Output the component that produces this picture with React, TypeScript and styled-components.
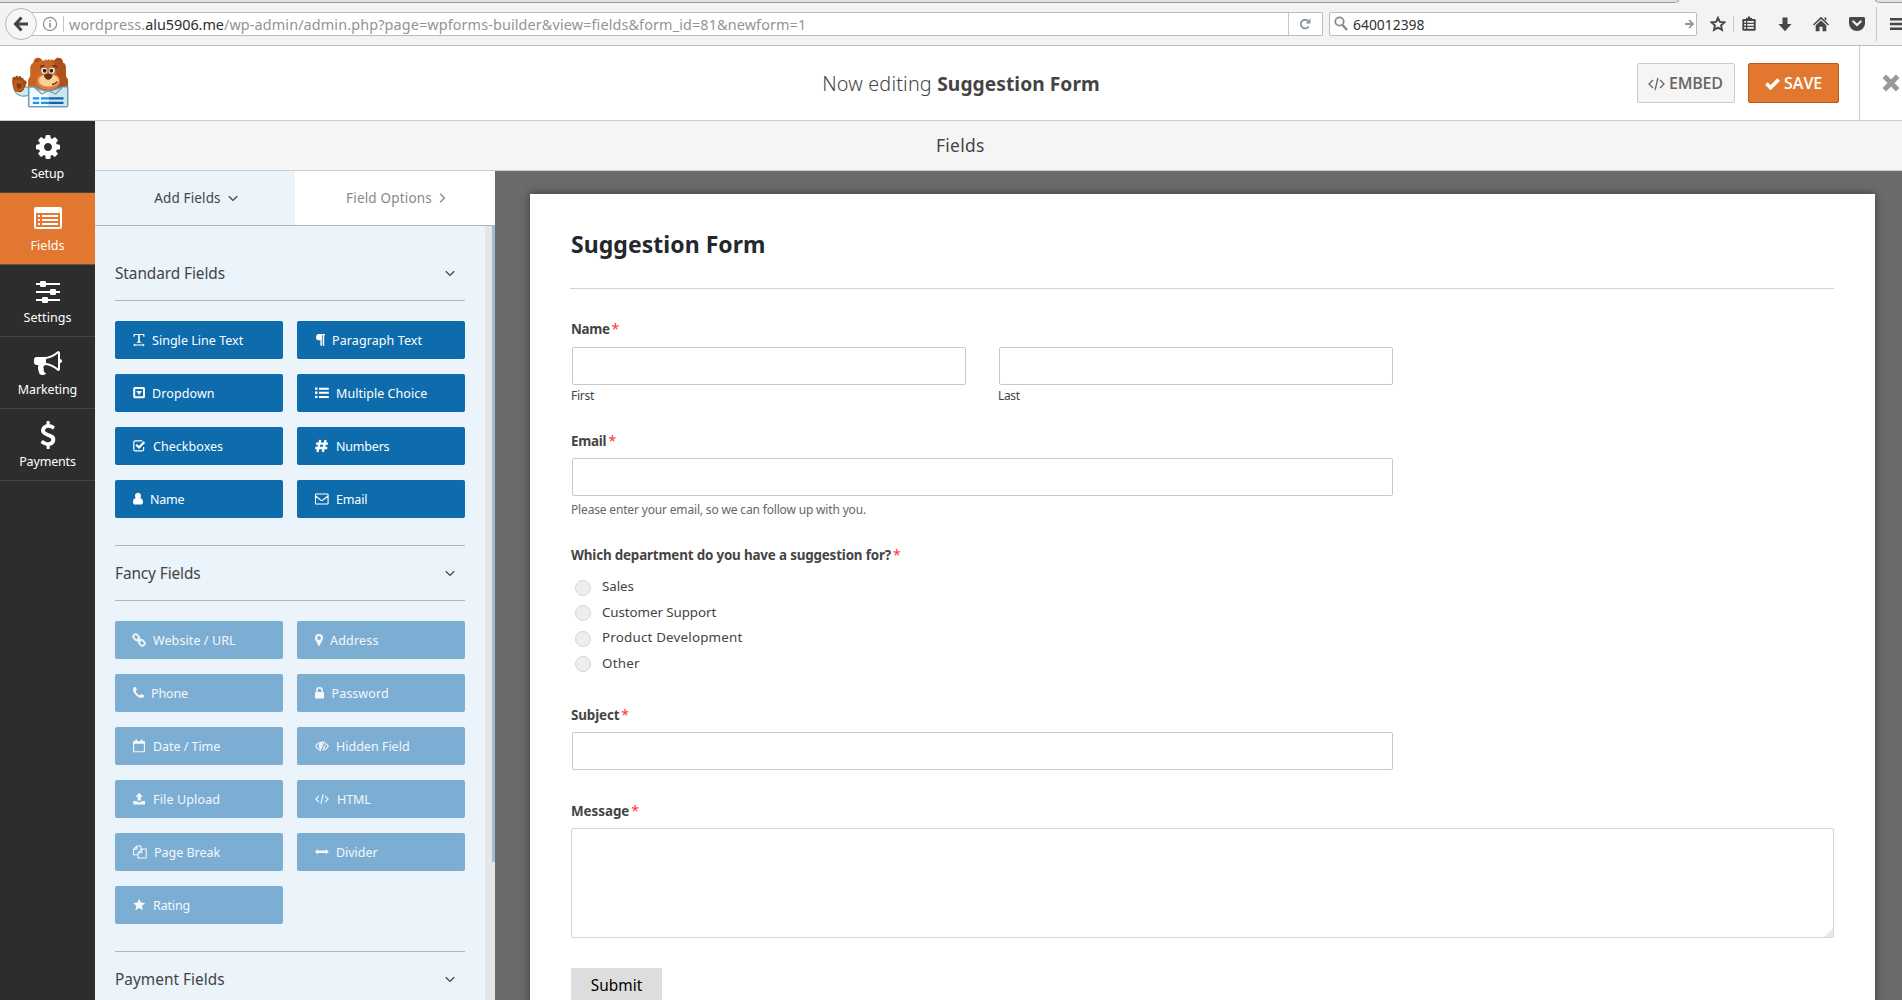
import React from 'react';
import styled, { createGlobalStyle, css } from 'styled-components';

const GlobalStyle = createGlobalStyle`
  *, *::before, *::after { box-sizing: border-box; }
  html, body { margin: 0; padding: 0; }
  body {
    overflow: hidden;
    background: #fff;
    color: #444;
    font-family: "Noto Sans", "Open Sans", sans-serif;
  }
  svg { display: block; flex: none; }
`;

const Window = styled.div`
  width: 1902px;
  height: 1000px;
  overflow: hidden;
  display: flex;
  flex-direction: column;
`;

const Text = styled.span<{ $ls?: number }>`
  letter-spacing: ${(p) => p.$ls ?? 0}px;
  white-space: pre;
`;

/* ---------- browser chrome ---------- */

const TabStrip = styled.div`
  display: flex;
  justify-content: space-between;
  height: 3px;
  flex: none;
  background: #f3f3f3;
`;

const TabEdge = styled.div<{ $width: number; $side: 'left' | 'right' }>`
  width: ${(p) => p.$width}px;
  height: 3px;
  background: #e1e1e1;
  border-bottom: 1px solid #979797;
  ${(p) =>
    p.$side === 'left'
      ? css`border-right: 1px solid #979797; border-bottom-right-radius: 6px 3px;`
      : css`border-left: 1px solid #979797; border-bottom-left-radius: 6px 3px;`}
`;

const BrowserBar = styled.div`
  display: flex;
  align-items: center;
  height: 43px;
  flex: none;
  padding-left: 5px;
  background: #f3f3f3;
  border-bottom: 1px solid #bfbfbf;
`;

const BackButton = styled.div`
  display: flex;
  align-items: center;
  justify-content: center;
  width: 32px;
  height: 32px;
  flex: none;
  z-index: 1;
  border: 1px solid #b9b9b9;
  border-radius: 50%;
  background: #f6f6f6;
`;

const UrlField = styled.div`
  display: flex;
  align-items: center;
  width: 1292px;
  height: 24px;
  flex: none;
  margin-left: -6px;
  padding-left: 11px;
  background: #fff;
  border: 1px solid #bdbdbd;
  border-left: 0;
  border-radius: 0 2px 2px 0;
  color: #949494;
  font-size: 14.4px;
  line-height: 22px;

  strong { color: #2e2e2e; font-weight: 400; }
`;

const FieldRule = styled.i<{ $left: number; $right: number; $height?: number }>`
  width: 1px;
  height: ${(p) => p.$height ?? 16}px;
  flex: none;
  margin: 0 ${(p) => p.$right}px 0 ${(p) => p.$left}px;
  background: #c6c6c6;
`;

const UrlText = styled.div`
  flex: 1;
  padding-top: 1px;
`;

const SearchField = styled.div`
  display: flex;
  align-items: center;
  width: 368px;
  height: 24px;
  flex: none;
  margin: 0 13px 0 6px;
  padding: 0 2px 0 4px;
  background: #fff;
  border: 1px solid #bdbdbd;
  border-radius: 2px;
  color: #333;
  font-size: 13.9px;
  line-height: 22px;
`;

const SearchText = styled.div`
  flex: 1;
  margin-left: 5px;
  padding-top: 1px;
`;

const BarIcons = styled.div`
  display: flex;
  align-items: center;
  color: #474747;
`;

/* ---------- builder header ---------- */

const Header = styled.header`
  display: flex;
  align-items: center;
  width: 1922px;
  height: 75px;
  flex: none;
  background: #fff;
  border-bottom: 1px solid #ccc;
`;

const HeaderSide = styled.div<{ $end?: boolean }>`
  display: flex;
  flex: 1 0 0;
  align-items: center;
  height: 100%;
  justify-content: ${(p) => (p.$end ? 'flex-end' : 'flex-start')};
`;

const Logo = styled.div`
  margin-left: 10px;
`;

const HeaderTitle = styled.h1`
  margin: 0;
  padding-top: 2px;
  font-size: 19.8px;
  font-weight: 300;
  line-height: 28px;
  white-space: pre;

  strong { font-weight: 700; font-size: 19.2px; }
`;

const HeaderButton = styled.button<{ $primary?: boolean; $width: number }>`
  display: flex;
  align-items: center;
  width: ${(p) => p.$width}px;
  height: 40px;
  margin: 0 0 0 13px;
  padding: 0 0 1px ${(p) => (p.$primary ? 16 : 10)}px;
  gap: 4px;
  border: 1px solid ${(p) => (p.$primary ? '#b85a1b' : '#ccc')};
  border-radius: 2px;
  background: ${(p) => (p.$primary ? '#e27730' : '#f5f5f5')};
  color: ${(p) => (p.$primary ? '#fff' : '#666')};
  font: 600 16px/20px "Open Sans", "Noto Sans", sans-serif;

  svg { position: relative; top: 1px; }
`;

const CloseCell = styled.div`
  display: flex;
  align-items: center;
  justify-content: center;
  width: 63px;
  height: 100%;
  margin-left: 20px;
  border-left: 1px solid #ccc;
  color: #999;
`;

/* ---------- body ---------- */

const Body = styled.div`
  display: flex;
  flex: 1;
  min-height: 0;
`;

const Rail = styled.nav`
  width: 95px;
  flex: none;
  background: #2d2d2d;
`;

const RailItem = styled.div<{ $active?: boolean }>`
  display: flex;
  flex-direction: column;
  align-items: center;
  height: 72px;
  padding-top: 11px;
  border-bottom: 1px solid ${(p) => (p.$active ? '#5f5751' : '#444')};
  background: ${(p) => (p.$active ? '#e27730' : '#2d2d2d')};
  color: #fff;
  font-size: 12.5px;
  line-height: 18px;
`;

const RailIcon = styled.div<{ $drop?: number }>`
  display: flex;
  align-items: flex-start;
  justify-content: center;
  height: 33px;
  width: 32px;
  padding-top: ${(p) => p.$drop ?? 1}px;
`;

const Main = styled.main`
  flex: 1;
  min-width: 0;
  display: flex;
  flex-direction: column;
`;

const SectionBar = styled.div`
  height: 50px;
  flex: none;
  padding-left: 841px;
  background: #f5f5f5;
  border-bottom: 1px solid #ccc;
  font-size: 17.4px;
  line-height: 49px;
`;

const Workspace = styled.div`
  display: flex;
  flex: 1;
  min-height: 0;
`;

const Panel = styled.aside`
  display: flex;
  flex-direction: column;
  width: 400px;
  flex: none;
`;

const PanelTabs = styled.div`
  display: flex;
  height: 55px;
  flex: none;
  border-bottom: 1px solid #b0b6bd;
`;

const PanelTab = styled.div<{ $active?: boolean }>`
  display: flex;
  align-items: center;
  justify-content: center;
  gap: 7px;
  width: 200px;
  padding-left: 2px;
  background: ${(p) => (p.$active ? '#ebf3fb' : '#fff')};
  color: ${(p) => (p.$active ? '#444' : '#888')};
  font-size: 13.5px;
  line-height: 20px;
`;

const PanelScroll = styled.div`
  display: flex;
  flex: 1;
  min-height: 0;
  background: #ebf3fb;
`;

const PanelContent = styled.div`
  width: 390px;
  padding: 21px 20px 0;
  overflow: hidden;
`;

const ScrollTrack = styled.div`
  width: 10px;
  padding-left: 7px;
  background: #e6e6e6;
`;

const ScrollThumb = styled.div`
  width: 3px;
  height: 636px;
  background: #9fbbd6;
`;

const Group = styled.section`
  & + & { border-top: 1px solid #b0b6bd; margin-top: 27px; padding-top: 1px; }
`;

const GroupHeading = styled.h2`
  display: flex;
  align-items: center;
  justify-content: space-between;
  height: 54px;
  margin: 0 0 20px;
  padding-right: 10px;
  border-bottom: 1px solid #b0b6bd;
  font-size: 15.4px;
  font-weight: 400;
`;

const ButtonGrid = styled.div`
  display: grid;
  grid-template-columns: 168px 168px;
  gap: 15px 14px;
`;

const FieldButton = styled.div<{ $muted?: boolean }>`
  display: flex;
  align-items: center;
  height: 38px;
  padding-left: 18px;
  border-radius: 2px;
  background: ${(p) => (p.$muted ? '#7caed4' : '#0e6cad')};
  color: ${(p) => (p.$muted ? '#f4f8fb' : '#fff')};
  font-size: 12.5px;
  line-height: 18px;

  ${Text} { padding-top: 2px; }
`;

const IconSlot = styled.span<{ $width: number }>`
  width: ${(p) => p.$width}px;
  flex: none;
`;

/* ---------- form preview ---------- */

const Canvas = styled.div`
  flex: 1;
  min-width: 0;
  padding: 23px 27px 0 35px;
  background: #6b6b6b;
`;

const Sheet = styled.div`
  height: 900px;
  padding: 35px 41px 0;
  background: #fff;
  box-shadow: 0 0 9px rgba(0, 0, 0, 0.45);
`;

const SheetTitle = styled.h2`
  height: 60px;
  margin: 0 0 0 -1px;
  padding-left: 1px;
  border-bottom: 1px solid #d4d4d4;
  color: #23282d;
  font-size: 23px;
  font-weight: 700;
  line-height: 30px;
`;

const Field = styled.div<{ $top: number }>`
  padding-top: ${(p) => p.$top}px;
`;

const Label = styled.div<{ $gap: number }>`
  height: 20px;
  margin-bottom: ${(p) => p.$gap}px;
  font-size: 13.4px;
  font-weight: 700;
  line-height: 20px;
`;

const Star = styled.span`
  margin-left: 2px;
  color: #f33;
  font-weight: 400;
  font-size: 14px;
`;

const Input = styled.div<{ $width: number }>`
  width: ${(p) => p.$width}px;
  height: 38px;
  margin-left: 1px;
  border: 1px solid #c8c8c8;
  border-radius: 2px;
`;

const NameRow = styled.div`
  display: flex;
  gap: 32px;
`;

const SubLabel = styled.div<{ $top: number; $color: string }>`
  height: 16px;
  margin-top: ${(p) => p.$top}px;
  color: ${(p) => p.$color};
  font-size: 12px;
  line-height: 18px;
`;

const Choices = styled.div`
  display: grid;
  grid-template-rows: 25px 26px 25px 26px;
`;

const Choice = styled.div`
  display: flex;
  align-items: center;
  padding-left: 4px;
  gap: 11px;
  font-size: 13.4px;
  line-height: 18px;

  ${Text} { padding-bottom: 1px; }
`;

const Radio = styled.span`
  width: 16px;
  height: 16px;
  margin-top: 2px;
  border: 1px solid #d6d6d6;
  border-radius: 50%;
  background: #eee;
`;

const TextArea = styled.div`
  display: flex;
  align-items: flex-end;
  justify-content: flex-end;
  height: 110px;
  border: 1px solid #d4d4d4;
  border-radius: 2px;
`;

const Submit = styled.button`
  width: 91px;
  height: 35px;
  margin-top: 30px;
  padding: 0;
  border: 0;
  background: #ddd;
  color: #000;
  font: 400 15.4px/34px "Noto Sans", sans-serif;
`;

/* ---------- icons ---------- */

const Chevron = ({ right }: { right?: boolean }) =>
  right ? (
    <svg width="7" height="10" viewBox="0 0 7 10" fill="none" stroke="currentColor" strokeWidth="1.3">
      <path d="M1.2 .8 5.4 5 1.2 9.2" />
    </svg>
  ) : (
    <svg width="10" height="7" viewBox="0 0 10 7" fill="none" stroke="currentColor" strokeWidth="1.3">
      <path d="M.8 1.2 5 5.4 9.2 1.2" />
    </svg>
  );

const CogIcon = () => (
  <svg width="28" height="28" viewBox="0 0 1792 1792" fill="currentColor">
    <path d="M1152 896q0-106-75-181t-181-75-181 75-75 181 75 181 181 75 181-75 75-181zm512-109v222q0 12-8 23t-20 13l-185 28q-19 54-39 91 35 50 107 138 10 12 10 25t-9 23q-27 37-99 108t-94 71q-12 0-26-9l-138-108q-44 23-91 38-16 136-29 186-7 28-36 28h-222q-14 0-24.5-8.5t-11.5-21.5l-28-184q-49-16-90-37l-141 107q-10 9-25 9-14 0-25-11-126-114-165-168-7-10-7-23 0-12 8-23 15-21 51-66.5t54-70.5q-27-50-41-99l-183-27q-13-2-21-12.5t-8-23.5v-222q0-12 8-23t19-13l186-28q14-46 39-92-40-57-107-138-10-12-10-24 0-10 9-23 26-36 98.5-107.5t94.5-71.5q13 0 26 10l138 107q44-23 91-38 16-136 29-186 7-28 36-28h222q14 0 24.5 8.5t11.5 21.5l28 184q49 16 90 37l142-107q9-9 24-9 13 0 25 10 129 119 165 170 7 8 7 22 0 12-8 23-15 21-51 66.5t-54 70.5q26 50 41 98l183 28q13 2 21 12.5t8 23.5z" />
  </svg>
);

const ListIcon = () => (
  <svg width="28" height="22" viewBox="0 0 28 22" fill="currentColor">
    <path fillRule="evenodd" d="M2.3 0h23.4A2.3 2.3 0 0 1 28 2.3v17.4a2.3 2.3 0 0 1-2.3 2.3H2.3A2.3 2.3 0 0 1 0 19.7V2.3A2.3 2.3 0 0 1 2.3 0zM2 6v13.6c0 .3.2.4.4.4h23.2c.2 0 .4-.2.4-.4V6z" />
    <path d="M4 8h2v2H4zM8 8h16v2H8zM4 12h2v2H4zM8 12h16v2H8zM4 16h2v2H4zM8 16h16v2H8z" />
  </svg>
);

const SlidersIcon = () => (
  <svg width="24" height="22" viewBox="0 0 24 22" fill="currentColor">
    <path d="M0 2h24v2H0zM0 10h24v2H0zM0 18h24v2H0z" />
    <rect x="4" y="0" width="6" height="6" rx="1.2" />
    <rect x="14" y="8" width="6" height="6" rx="1.2" />
    <rect x="6" y="16" width="6" height="6" rx="1.2" />
  </svg>
);

const BullhornIcon = () => (
  <svg width="28" height="28" viewBox="0 0 1792 1792" fill="currentColor">
    <path d="M1664 640q53 0 90.5 37.5t37.5 90.5-37.5 90.5-90.5 37.5v384q0 52-38 90t-90 38q-417-347-812-380-58 19-91 66t-31 100.5 40 92.5q-20 33-23 65.5t6 58 33.5 55 48 50 61.5 50.5q-29 58-111.5 83t-168.5 11.5-132-55.5q-7-23-29.5-87.5t-32-94.5-23-89-15-101 3.5-98.5 22-110.5h-122q-66 0-113-47t-47-113v-192q0-66 47-113t113-47h480q435 0 896-384 52 0 90 38t38 90v384zm-128 604v-954q-394 302-768 343v270q377 42 768 341z" />
  </svg>
);

const DollarIcon = () => (
  <svg width="28" height="28" viewBox="0 0 1792 1792" fill="currentColor">
    <path d="M1362 1185q0 153-99.5 263.5t-258.5 136.5v175q0 14-9 23t-23 9h-135q-13 0-22.5-9.5t-9.5-22.5v-175q-66-9-127.5-31t-101.5-44.5-74-48-46.5-37.5-17.5-18q-17-21-2-41l103-135q7-10 23-12 15-2 24 9l2 2q113 99 243 125 37 8 74 8 81 0 142.5-43t61.5-122q0-28-15-53t-33.5-42-58.5-37.5-66-32-80-32.5q-39-16-61.5-25t-61.5-26.5-62.5-31-56.5-35.5-53.5-42.5-43.5-49-35.5-58-21-66.5-8.5-78q0-138 98-242t255-134v-180q0-13 9.5-22.5t22.5-9.5h135q14 0 23 9t9 23v176q57 6 110.5 23t87 33.5 63.5 37.5 39 29 15 14q17 18 5 38l-81 146q-8 15-23 16-14 3-27-7-3-3-14.5-12t-39-26.5-58.5-32-74.5-26-85.5-11.5q-95 0-155 43t-60 111q0 26 8.5 48t29.5 41.5 39.5 33 56 31 60.5 27 70 27.5q53 20 81 31.5t76 35 75.5 42.5 62 50 53 63.5 31.5 76.5 13 94z" />
  </svg>
);

/* Glyphs of the field buttons, all on a 14px grid. */
const glyphs: Record<string, React.ReactNode> = {
  text: <path d="M.6 1h10.8v3h-.8L10 2H6.8v6.6l1.4.4v.7H3.8V9l1.400-.4V2H2L1.400 4H.6zM2.200 10.600v.9h7.600v-.9l2 1.500-2 1.400v-.9H2.200v.9L.2 12.100z" />,
  caret: (
    <>
      <path fillRule="evenodd" d="M2 1h8.200c1 0 1.800.8 1.800 1.800v7.600c0 1-.8 1.800-1.800 1.800H2c-1 0-1.800-.8-1.800-1.800V2.800C.2 1.800 1 1 2 1zm.2 2v7.200h7.800V3z" />
      <path d="M3.200 5h5.800L6.100 9z" />
    </>
  ),
  check: (
    <>
      <path d="M10.600 8v2.400c0 .9-.7 1.500-1.500 1.500H2.300C1.400 11.900.8 11.200.8 10.400V3.300c0-.9.7-1.500 1.500-1.500h7" fill="none" stroke="currentColor" strokeWidth="1.2" />
      <path d="M3.200 5.800 6 8.500l5.400-5.600" fill="none" stroke="currentColor" strokeWidth="2.2" />
    </>
  ),
  user: <path d="M5 .8a3 3 0 0 1 2.200 5.100C9.300 6.300 10 8.300 10 10.200c0 1.500-.9 2.300-2.100 2.300H2.200C.9 12.500 0 11.700 0 10.200c0-1.900.7-3.900 2.800-4.300A3 3 0 0 1 5 .8z" />,
  paragraph: <path d="M4.200 1H10v1.300H9.200v10.400H7.700V2.300H6.900v10.400H5.400V7.300H4.200A3.150 3.150 0 0 1 4.200 1z" />,
  list: <path d="M0 1.500h2.500v2.300H0zM4 1.700h9.800v2H4zM0 5.600h2.500v2.300H0zM4 5.800h9.800v2H4zM0 9.700h2.500V12H0zM4 9.900h9.800v2H4z" />,
  hash: <path d="M5.200 1 2.400 13M10.600 1 7.800 13M1 4.700h12M.2 9h12" fill="none" stroke="currentColor" strokeWidth="2.3" />,
  mail: <path d="M1.300 2h11c.5 0 .8.3.8.8v8.400c0 .5-.3.8-.8.8h-11c-.5 0-.8-.3-.8-.8V2.800c0-.5.3-.8.8-.8zM.6 4l5 4c.8.6 1.600.6 2.400 0l5-4" fill="none" stroke="currentColor" strokeWidth="1.1" />,
  link: (
    <g fill="none" stroke="currentColor" strokeWidth="1.7" transform="rotate(45 6 7)">
      <rect x="-1" y="4.7" width="6.2" height="4.6" rx="2.1" />
      <rect x="6.8" y="4.7" width="6.2" height="4.6" rx="2.1" />
      <path d="M3.500 7h5" strokeWidth="1.3" />
    </g>
  ),
  pin: <path fillRule="evenodd" d="M4 1a4 4 0 0 1 4 4c0 1.300-.5 2-1 3l-2.300 4.500c-.3.6-1.100.6-1.400 0L1 8C.5 7 0 6.300 0 5a4 4 0 0 1 4-4zm0 2.100a1.900 1.900 0 1 0 0 3.800 1.900 1.900 0 0 0 0-3.800z" />,
  phone: (
    <g transform="translate(-1.5 0) scale(.0078)">
      <path d="M1600 1240q0 27-10 70.5t-21 68.5q-21 50-122 106-94 51-186 51-27 0-53-3.5t-57.5-12.5-47-14.5-55.5-20.5-49-18q-98-35-175-83-127-79-264-216t-216-264q-48-77-83-175-3-9-18-49t-20.5-55.5-14.5-47-12.5-57.5-3.5-53q0-92 51-186 56-101 106-122 25-11 68.5-21t70.5-10q14 0 21 3 18 6 53 76 11 19 30 54t35 63.5 31 53.5q3 4 17.5 25t21.5 35.5 7 28.5q0 20-28.5 50t-62 55-62 53-28.5 46q0 9 5 22.5t8.5 20.5 14 24 11.5 19q76 137 174 235t235 174q2 1 19 11.5t24 14 20.5 8.5 22.5 5q18 0 46-28.5t53-62 55-62 50-28.5q14 0 28.5 7t35.5 21.5 25 17.5q25 15 53.5 31t63.5 35 54 30q70 35 76 53 3 7 3 21z" />
    </g>
  ),
  lock: (
    <>
      <rect x="0" y="6" width="9" height="6.5" rx=".7" />
      <path d="M1.900 6.500V4.300a2.600 2.600 0 0 1 5.200 0v2.200" fill="none" stroke="currentColor" strokeWidth="1.5" />
    </>
  ),
  calendar: (
    <>
      <path d="M.6 2.700h10.800v10.100H.6z" fill="none" stroke="currentColor" strokeWidth="1.1" />
      <path d="M.5 2.400h11v2.400H.5zM2.300.6h1.900v3H2.300zM7.800.6h1.900v3H7.800z" />
    </>
  ),
  eye: (
    <g fill="none" stroke="currentColor" strokeWidth="1.1">
      <path d="M4.800 10.600C2.800 10 1.400 8.500.7 7.200 2 5 4.300 3.300 7 3.300l1 .1M9.900 4.200c1.500.7 2.700 1.800 3.400 3-1.200 2.100-3.400 3.700-6 3.800" />
      <path d="M4.200 6.500c.2-1.200 1.200-2.100 2.400-2.300L5.200 8.900c-.7-.6-1.100-1.400-1-2.400z" fill="currentColor" />
      <path d="M9.400 2 4.800 12.200M9.800 6.400c.2 1.200-.6 2.500-1.900 2.900" />
    </g>
  ),
  upload: <path d="M6.200.8 10 4.800H7.800v3.700H4.600V4.800H2.400zM.2 9h3.400c.3.9 1.300 1.200 2.600 1.200S8.500 9.900 8.800 9H12v3.600H.2z" />,
  code: <path d="M4 3.800.8 7 4 10.200M10 3.800 13.200 7 10 10.200M8.100 2.200 5.900 11.800" fill="none" stroke="currentColor" strokeWidth="1.1" />,
  copy: (
    <g fill="none" stroke="currentColor" strokeWidth="1.1">
      <path d="M5 9.700H.6V4.200L3.900 1h3.900v3.200M3.900 1v3.300H.6" />
      <path d="M8.800 4h4.400v9H5V7.700zM8.800 4v3.700H5" />
    </g>
  ),
  arrows: <path d="M0 6.700 3 3.900v1.700h7.800V3.900l3 2.800-3 2.800V7.900H3v1.600z" />,
  star: <path d="m6.200.8 1.700 3.800 4.200.5-3.100 2.900.8 4.200-3.600-2.100-3.700 2.100.8-4.200L.2 5.100l4.200-.5z" />,
};

const Glyph = ({ name }: { name: string }) => (
  <svg width="14" height="14" viewBox="0 0 14 14" fill="currentColor" overflow="visible">
    {glyphs[name]}
  </svg>
);

const BearLogo = () => (
  <svg width="60" height="52" viewBox="0 0 60 52">
    <path d="M4 31c1 7 8 10 15 7l1-7c-3-2-12-1-16 0z" fill="#d3e8ef" stroke="#6d9fb2" strokeWidth="1.2" />
    <path d="M2.300 23c0-3 2-4 3-2.500.2-2.300 2.700-2.300 3 0 .5-2 3-1.800 3 .3 2-.6 2.800 1.200 2.300 2.400 3 0 3.800 2 2.600 4l-3 6.300c-2 2.500-6.500 2.300-8.500-.2-2-3-2.800-7-2.400-10.300z" fill="#a04a17" />
    <path d="M3.500 24.500c2-2 7.500-2 9.300.5l.7 6.500c-1.500 3-6.500 3.200-8.500.8-1.500-2.300-1.700-5-1.500-7.800z" fill="#c05c1b" />
    <path d="M6.300 26.500h5.400l-.5 4c-.8 1.600-3.400 1.600-4.200 0z" fill="#7d3c16" />
    <circle cx="28" cy="5.300" r="4.500" fill="#b85a1b" />
    <circle cx="28" cy="5.800" r="2.200" fill="#7d3c16" />
    <circle cx="48.500" cy="5.300" r="4.500" fill="#a54e18" />
    <circle cx="48.500" cy="5.800" r="2.200" fill="#7d3c16" />
    <path d="M21.500 7c3-2 8.500-3.500 13.500-3.500L36 2l1.500 1.500L39 2l1.500 1.500L42 2l1 1.500c4 0 9.500 1.500 12 3.500l.8 3v9l2.200 4v8l-6 3H24.500l-6.500-3v-8l2.200-4v-9z" fill="#cb6420" />
    <path d="M43 3.500c4 0 9.500 1.500 12 3.500l.8 3v9l2.200 4v8l-6 3H38.500c9-3 11.500-9 8.500-16z" fill="#ad521a" />
    <path d="M26.500 23.500c0-4.500 5-7 12-7S50 19 50 23.500c0 6-4 9-11.500 9s-12-3-12-9z" fill="#e07d45" />
    <path d="M29 22c1-3 5-4.500 9.500-4.500S47.500 19 48.500 22c1 5-4 7.500-10 7.500S28 27 29 22z" fill="#f8d193" />
    <path d="M34 18.300c0-2 8.500-2 8.500 0 0 2.500-2.700 4.500-4.200 4.500S34 20.800 34 18.300z" fill="#6b2f14" />
    <path d="M47 24.500c-1 2-3 3-5 3" fill="none" stroke="#6b2f14" strokeWidth="1.4" />
    <path d="M30 10.500c1-1.500 3-2 4.500-1.500M42.500 9c1.500-.5 3.500 0 4.500 1.500" fill="none" stroke="#5f2a12" strokeWidth="1.3" />
    <circle cx="34.300" cy="13.800" r="3" fill="#fff" />
    <circle cx="41.700" cy="13.800" r="3" fill="#fff" />
    <circle cx="34.600" cy="13.800" r="2" fill="#1d2a38" />
    <circle cx="41.400" cy="13.800" r="2" fill="#1d2a38" />
    <path d="M18.700 30h5c4 1.500 9 3.700 14.800 4.200 6-.5 10.500-2.700 14.500-4.200h4.700V48.500c0 .8-.6 1.200-1.200 1.200H20c-.8 0-1.300-.5-1.300-1.200z" fill="#f2f9fb" stroke="#6d9fb2" strokeWidth="1.6" />
    <path d="M38.500 34.800c6-.5 10.500-2.700 14.500-4h4V49H38.500z" fill="#cfe5ee" />
    <path d="M25 31l7 6 6.500-3.500 7 3.500 6.500-6" fill="none" stroke="#6d9fb2" strokeWidth="1.300" />
    <path d="M22.800 40.300h6.400v2.200h-6.400zM31 40.300h7.500v2.200H31zM22.800 44.800h6.400V47h-6.400zM31 44.800h7.500V47H31z" fill="#1e96e8" />
    <path d="M38.500 40.300h15v2.200h-15zM38.500 44.800h15V47h-15z" fill="#0f66ad" />
  </svg>
);

/* ---------- data ---------- */

interface FieldDef {
  label: string;
  icon: string;
  slot: number;
  ls: number;
}

const standardFields: FieldDef[] = [
  { label: 'Single Line Text', icon: 'text', slot: 19, ls: 0.03 },
  { label: 'Paragraph Text', icon: 'paragraph', slot: 17, ls: 0.1 },
  { label: 'Dropdown', icon: 'caret', slot: 19, ls: 0.1 },
  { label: 'Multiple Choice', icon: 'list', slot: 21, ls: 0.04 },
  { label: 'Checkboxes', icon: 'check', slot: 20, ls: 0.04 },
  { label: 'Numbers', icon: 'hash', slot: 21, ls: -0.2 },
  { label: 'Name', icon: 'user', slot: 17, ls: -0.2 },
  { label: 'Email', icon: 'mail', slot: 21, ls: -0.15 },
];

const fancyFields: FieldDef[] = [
  { label: 'Website / URL', icon: 'link', slot: 20, ls: 0.09 },
  { label: 'Address', icon: 'pin', slot: 15, ls: 0.19 },
  { label: 'Phone', icon: 'phone', slot: 18, ls: -0.15 },
  { label: 'Password', icon: 'lock', slot: 16.5, ls: 0.08 },
  { label: 'Date / Time', icon: 'calendar', slot: 20, ls: -0.05 },
  { label: 'Hidden Field', icon: 'eye', slot: 21, ls: 0 },
  { label: 'File Upload', icon: 'upload', slot: 20, ls: 0.15 },
  { label: 'HTML', icon: 'code', slot: 22, ls: -0.1 },
  { label: 'Page Break', icon: 'copy', slot: 21, ls: -0.02 },
  { label: 'Divider', icon: 'arrows', slot: 21, ls: -0.03 },
  { label: 'Rating', icon: 'star', slot: 20, ls: -0.15 },
];

const railItems = [
  { label: 'Setup', ls: -0.15, icon: <CogIcon />, drop: 1 },
  { label: 'Fields', ls: 0.07, icon: <ListIcon />, drop: 3, active: true },
  { label: 'Settings', ls: 0.05, icon: <SlidersIcon />, drop: 5 },
  { label: 'Marketing', ls: -0.12, icon: <BullhornIcon />, drop: 1 },
  { label: 'Payments', ls: -0.16, icon: <DollarIcon />, drop: 1 },
];

const choices = [
  { label: 'Sales', ls: -0.08 },
  { label: 'Customer Support', ls: -0.1 },
  { label: 'Product Development', ls: 0.18 },
  { label: 'Other', ls: 0.24 },
];

/* ---------- parts ---------- */

const FieldGroup = ({ title, ls, fields, muted }: { title: string; ls: number; fields: FieldDef[]; muted?: boolean }) => (
  <Group>
    <GroupHeading>
      <Text $ls={ls}>{title}</Text>
      <Chevron />
    </GroupHeading>
    <ButtonGrid>
      {fields.map((f) => (
        <FieldButton key={f.label} $muted={muted}>
          <IconSlot $width={f.slot}>
            <Glyph name={f.icon} />
          </IconSlot>
          <Text $ls={f.ls}>{f.label}</Text>
        </FieldButton>
      ))}
    </ButtonGrid>
  </Group>
);

const RequiredLabel = ({ children, ls, gap }: { children: string; ls: number; gap: number }) => (
  <Label $gap={gap}>
    <Text $ls={ls}>{children}</Text>
    <Star>*</Star>
  </Label>
);

const Browser = () => (
  <>
    <TabStrip>
      <TabEdge $width={1679} $side="left" />
      <TabEdge $width={27} $side="right" />
    </TabStrip>
    <BrowserBar>
      <BackButton>
        <svg width="16" height="16" viewBox="0 0 16 16" fill="none" stroke="#444" strokeWidth="3">
          <path d="M8.500 1.500 2.500 8l6 6.500M2.500 8H15" />
        </svg>
      </BackButton>
      <UrlField>
        <svg width="16" height="16" viewBox="0 0 16 16" fill="none" stroke="#8e8e8e">
          <circle cx="8" cy="8" r="6.6" strokeWidth="1.2" />
          <path d="M8 7v4.500M8 4.200v1.600" strokeWidth="1.6" />
        </svg>
        <FieldRule $left={5} $right={5} />
        <UrlText>
          <Text $ls={0.15}>wordpress.</Text>
          <strong>
            <Text $ls={-0.04}>alu5906.me</Text>
          </strong>
          <Text $ls={0.12}>/wp-admin/admin.php?page=wpforms-builder&amp;view=fields&amp;form_id=81&amp;newform=1</Text>
        </UrlText>
        <FieldRule $left={0} $right={10} $height={22} />
        <svg width="12" height="12" viewBox="0 0 12 12" fill="none" stroke="#8795a1" strokeWidth="1.8">
          <path d="M9.700 8.500A4.300 4.300 0 1 1 9.200 3" />
          <path d="M11.500.5v5h-5z" fill="#8795a1" stroke="none" />
        </svg>
        <FieldRule $left={0} $right={10} $height={0} />
      </UrlField>
      <SearchField>
        <svg width="14" height="16" viewBox="0 0 14 16" fill="none" stroke="#8a8a8a">
          <circle cx="5.500" cy="5.500" r="4.200" strokeWidth="1.8" />
          <path d="m8.500 9 4.500 5" strokeWidth="2.5" />
        </svg>
        <SearchText>
          <Text>640012398</Text>
        </SearchText>
        <svg width="9" height="10" viewBox="0 0 9 10" fill="none" stroke="#8795a1" strokeWidth="1.8">
          <path d="M0 5h8M4.200 1 8 5 4.200 9" />
        </svg>
      </SearchField>
      <BarIcons>
        <svg width="16" height="16" viewBox="0 0 16 16" fill="none" stroke="currentColor" strokeWidth="1.9">
          <path d="m8 1.800 1.900 4.100 4.500.5-3.300 3 .9 4.500-4-2.300-4 2.300.9-4.500-3.300-3 4.500-.5z" />
        </svg>
        <FieldRule $left={7} $right={7} />
        <svg width="16" height="16" viewBox="0 0 16 16" fill="currentColor">
          <path fillRule="evenodd" d="M5 2h1.500L7.500.3h1L9.500 2H11v1h2.500c.8 0 1.200.5 1.200 1.200v9.300c0 .8-.4 1.200-1.200 1.200h-11c-.8 0-1.200-.4-1.200-1.200V4.200C1.300 3.500 1.700 3 2.500 3H5zM3.200 5v1.800H5V5zm3.100 0v1.800h6.500V5zM3.200 8v1.800H5V8zm3.100 0v1.800h6.500V8zM3.200 11v1.800H5V11zm3.100 0v1.800h6.500V11z" />
        </svg>
        <FieldRule $left={9} $right={11} $height={0} />
        <svg width="14" height="16" viewBox="0 0 14 16" fill="currentColor">
          <path d="M4.500 1.500h5V8h4L7 15.200.5 8h4z" />
        </svg>
        <FieldRule $left={10} $right={10} $height={0} />
        <svg width="16" height="16" viewBox="0 0 16 16" fill="currentColor">
          <path d="M8 .8 16 8.600l-.9 1L8 2.900.9 9.600l-.9-1z" />
          <path d="M8 4.500 13.300 9.300v5.900h-3.800v-4.400h-3v4.400H2.700V9.300zM11.500 1.500h1.800v3.500l-1.800-1.800z" />
        </svg>
        <FieldRule $left={9} $right={10} $height={0} />
        <svg width="16" height="16" viewBox="0 0 16 16" fill="none">
          <path d="M1.500 1h13c1 0 1.500.6 1.500 1.500V7.500a8 7.500 0 0 1-16 0V2.500C0 1.600.5 1 1.500 1z" fill="currentColor" />
          <path d="m4.300 5.500 3.700 3.500 3.700-3.500" stroke="#f3f3f3" strokeWidth="2.2" strokeLinecap="round" />
        </svg>
        <FieldRule $left={11} $right={13} $height={34} />
        <svg width="16" height="14" viewBox="0 0 16 14" fill="currentColor">
          <path d="M0 1h16v2.600H0zM0 5.700h16v2.600H0zM0 10.400h16V13H0z" />
        </svg>
      </BarIcons>
    </BrowserBar>
  </>
);

export default function App() {
  return (
    <Window>
      <GlobalStyle />
      <Browser />
      <Header>
        <HeaderSide>
          <Logo>
            <BearLogo />
          </Logo>
        </HeaderSide>
        <HeaderTitle>
          <Text $ls={0.18}>Now editing </Text>
          <strong>
            <Text $ls={0.06}>Suggestion Form</Text>
          </strong>
        </HeaderTitle>
        <HeaderSide $end>
          <HeaderButton $width={98}>
            <svg width="17" height="14" viewBox="0 0 17 14" fill="none" stroke="currentColor" strokeWidth="1.3">
              <path d="M5 3 1 7l4 4M12 3l4 4-4 4M9.900 1 7.100 13" />
            </svg>
            <Text $ls={-0.25}>EMBED</Text>
          </HeaderButton>
          <HeaderButton $primary $width={91}>
            <svg width="15" height="12" viewBox="0 0 15 12" fill="none" stroke="currentColor" strokeWidth="3.6">
              <path d="m1.400 5.600 4.200 4.200 8.100-8.200" />
            </svg>
            <Text $ls={0}>SAVE</Text>
          </HeaderButton>
          <CloseCell>
            <svg width="18" height="18" viewBox="0 0 18 18" fill="none" stroke="currentColor" strokeWidth="5">
              <path d="m2.300 2.300 13.400 13.400M15.700 2.300 2.300 15.700" />
            </svg>
          </CloseCell>
        </HeaderSide>
      </Header>
      <Body>
        <Rail>
          {railItems.map((item) => (
            <RailItem key={item.label} $active={item.active}>
              <RailIcon $drop={item.drop}>{item.icon}</RailIcon>
              <Text $ls={item.ls}>{item.label}</Text>
            </RailItem>
          ))}
        </Rail>
        <Main>
          <SectionBar>
            <Text $ls={0.28}>Fields</Text>
          </SectionBar>
          <Workspace>
            <Panel>
              <PanelTabs>
                <PanelTab $active>
                  <Text $ls={0.12}>Add Fields</Text>
                  <Chevron />
                </PanelTab>
                <PanelTab>
                  <Text $ls={0.18}>Field Options</Text>
                  <Chevron right />
                </PanelTab>
              </PanelTabs>
              <PanelScroll>
                <PanelContent>
                  <FieldGroup title="Standard Fields" ls={-0.08} fields={standardFields} />
                  <FieldGroup title="Fancy Fields" ls={-0.1} fields={fancyFields} muted />
                  <FieldGroup title="Payment Fields" ls={0.02} fields={[]} />
                </PanelContent>
                <ScrollTrack>
                  <ScrollThumb />
                </ScrollTrack>
              </PanelScroll>
            </Panel>
            <Canvas>
              <Sheet>
                <SheetTitle>
                  <Text $ls={0.05}>Suggestion Form</Text>
                </SheetTitle>
                <Field $top={30}>
                  <RequiredLabel ls={-0.35} gap={8}>Name</RequiredLabel>
                  <NameRow>
                    <div>
                      <Input $width={394} />
                      <SubLabel $top={2} $color="#444">
                        <Text $ls={-0.25}>First</Text>
                      </SubLabel>
                    </div>
                    <div>
                      <Input $width={394} />
                      <SubLabel $top={2} $color="#444">
                        <Text $ls={-0.35}>Last</Text>
                      </SubLabel>
                    </div>
                  </NameRow>
                </Field>
                <Field $top={28}>
                  <RequiredLabel ls={-0.24} gap={7}>Email</RequiredLabel>
                  <Input $width={821} />
                  <SubLabel $top={5} $color="#666">
                    <Text $ls={-0.165}>Please enter your email, so we can follow up with you.</Text>
                  </SubLabel>
                </Field>
                <Field $top={28}>
                  <RequiredLabel ls={-0.17} gap={9}>Which department do you have a suggestion for?</RequiredLabel>
                  <Choices>
                    {choices.map((c) => (
                      <Choice key={c.label}>
                        <Radio />
                        <Text $ls={c.ls}>{c.label}</Text>
                      </Choice>
                    ))}
                  </Choices>
                </Field>
                <Field $top={29}>
                  <RequiredLabel ls={-0.13} gap={7}>Subject</RequiredLabel>
                  <Input $width={821} />
                </Field>
                <Field $top={31}>
                  <RequiredLabel ls={-0.04} gap={7}>Message</RequiredLabel>
                  <TextArea>
                    <svg width="9" height="9" viewBox="0 0 9 9" fill="#e9e9e9">
                      <path d="M9 0v9H0z" />
                    </svg>
                  </TextArea>
                </Field>
                <Submit>
                  <Text $ls={0.04}>Submit</Text>
                </Submit>
              </Sheet>
            </Canvas>
          </Workspace>
        </Main>
      </Body>
    </Window>
  );
}
